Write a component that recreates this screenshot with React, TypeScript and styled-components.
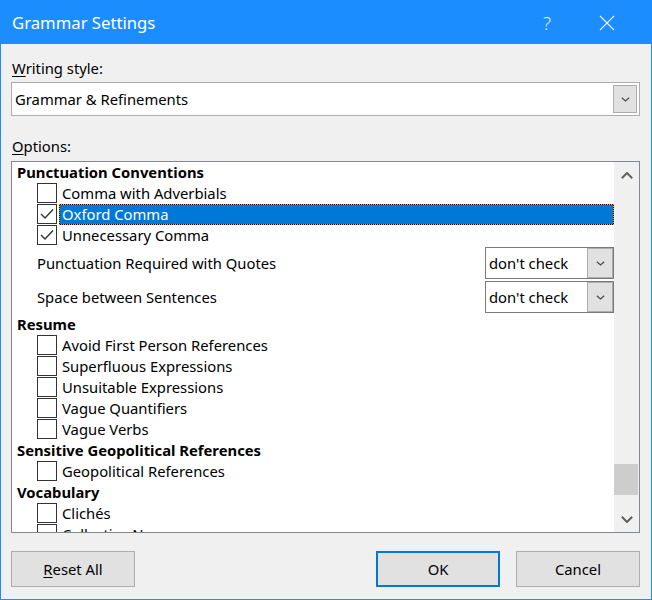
import React from "react";
import styled, { createGlobalStyle } from "styled-components";

const GlobalStyle = createGlobalStyle`
  html, body { margin: 0; padding: 0; background: #f0f0f0; }
  body {
    font-family: "Noto Sans", "Segoe UI", sans-serif;
    font-size: 14.8px;
    color: #000;
  }
  * { box-sizing: border-box; }
`;

const Window = styled.div`
  width: 652px;
  height: 600px;
  border: 1px solid #1c8dfe;
  border-top: none;
  background: #f0f0f0;
  display: flex;
  flex-direction: column;
`;

const TitleBar = styled.div`
  height: 44px;
  margin: 0 -1px;
  padding: 2px 0 0 12px;
  background: #1c8dfe;
  color: #fff;
  display: flex;
  align-items: center;
`;

const Title = styled.div`
  flex: 1;
  font-size: 16.7px;
  line-height: 24px;
`;

const TitleButton = styled.div`
  width: 60px;
  height: 40px;
  display: flex;
  align-items: center;
  justify-content: center;
  color: rgba(255, 255, 255, 0.85);
  font-size: 19px;
  font-weight: 300;
`;

const TitleEnd = styled.div`
  width: 15px;
`;

const Body = styled.div`
  flex: 1;
  display: flex;
  flex-direction: column;
  padding: 0 11px 0 10px;
`;

const FieldLabel = styled.div<{ $top: number }>`
  margin-top: ${(p) => p.$top}px;
  height: 20px;
  line-height: 20px;
  padding-left: 1px;
  white-space: nowrap;
`;

const AccessKey = styled.span`
  text-decoration: underline;
  text-decoration-thickness: 1px;
  text-underline-offset: 2px;
`;

const MainSelect = styled.div`
  margin-top: 4px;
  height: 34px;
  background: #fff;
  border: 1px solid #adadad;
  display: flex;
  align-items: stretch;
`;

const SelectText = styled.div`
  flex: 1;
  display: flex;
  align-items: center;
  padding-left: 3px;
  white-space: nowrap;
`;

const DropButton = styled.div<{ $inset: number }>`
  width: ${(p) => 26 - p.$inset}px;
  margin: ${(p) => p.$inset}px;
  background: #e1e1e1;
  border: 1px solid #adadad;
  display: flex;
  align-items: center;
  justify-content: center;
`;

const ListBox = styled.div`
  margin-top: 5px;
  height: 372px;
  border: 1px solid #828790;
  background: #fff;
  display: flex;
`;

const ListContent = styled.div`
  flex: 1;
  overflow: hidden;
`;

const Heading = styled.div`
  height: 21px;
  line-height: 21px;
  padding-left: 5px;
  font-weight: 700;
  white-space: nowrap;
`;

const CheckRow = styled.div`
  height: 21px;
  display: flex;
  align-items: flex-start;
  padding-left: 25px;
`;

const Box = styled.div`
  width: 20px;
  height: 20px;
  border: 1px solid #333;
  background: #fff;
  display: flex;
  align-items: center;
  justify-content: center;
  flex-shrink: 0;
`;

const FocusFrame = styled.div<{ $selected: boolean }>`
  flex: 1;
  height: 21px;
  margin-left: 2px;
  background: ${(p) => (p.$selected ? "#000" : "transparent")};
`;

const CheckLabel = styled.div<{ $selected: boolean }>`
  height: 21px;
  line-height: 19px;
  padding-left: 2px;
  white-space: nowrap;
  border: 1px ${(p) => (p.$selected ? "dotted #f7a135" : "solid transparent")};
  background: ${(p) => (p.$selected ? "#0078d7" : "transparent")};
  background-clip: padding-box;
  color: ${(p) => (p.$selected ? "#fff" : "#000")};
`;

const SelectRow = styled.div`
  height: 34px;
  display: flex;
  align-items: center;
  justify-content: space-between;
  padding-left: 25px;
`;

const SmallSelect = styled.div`
  width: 129px;
  height: 32px;
  border: 1px solid #7a7a7a;
  background: #fff;
  display: flex;
  align-items: stretch;
`;

const ScrollBar = styled.div`
  width: 25px;
  background: #f0f0f0;
  display: flex;
  flex-direction: column;
`;

const ArrowButton = styled.div`
  height: 26px;
  display: flex;
  align-items: center;
  justify-content: center;
`;

const Track = styled.div`
  flex: 1;
`;

const Thumb = styled.div<{ $offset: number; $size: number }>`
  margin: ${(p) => p.$offset}px 1px 0 0;
  height: ${(p) => p.$size}px;
  background: #cdcdcd;
`;

const ButtonRow = styled.div`
  margin-top: 18px;
  height: 36px;
  display: flex;
  gap: 16px;
`;

const Spacer = styled.div`
  flex: 1;
`;

const PushButton = styled.button<{ $default?: boolean }>`
  width: 124px;
  height: 36px;
  background: #e1e1e1;
  border: ${(p) => (p.$default ? "2px solid #0078d7" : "1px solid #adadad")};
  font-family: inherit;
  font-size: 14.8px;
  color: #000;
  padding: 0;
  white-space: nowrap;
`;

const Chevron = ({ up = false, color = "#606060", w = 10, h = 6, sw = 1 }: { up?: boolean; color?: string; w?: number; h?: number; sw?: number }) => (
  <svg width={w} height={h} viewBox={`0 0 ${w} ${h}`}>
    <polyline
      points={up ? `0.8,${h - 0.8} ${w / 2},1 ${w - 0.8},${h - 0.8}` : `0.8,0.8 ${w / 2},${h - 1} ${w - 0.8},0.8`}
      fill="none"
      stroke={color}
      strokeWidth={sw}
    />
  </svg>
);

const Tick = () => (
  <svg width="14" height="12" viewBox="0 0 14 12">
    <polyline points="1,6 5,10 13,1.5" fill="none" stroke="#333" strokeWidth="1.4" />
  </svg>
);

type Item =
  | { kind: "heading"; text: string }
  | { kind: "check"; text: string; checked?: boolean; selected?: boolean }
  | { kind: "select"; text: string; value: string };

const items: Item[] = [
  { kind: "heading", text: "Punctuation Conventions" },
  { kind: "check", text: "Comma with Adverbials" },
  { kind: "check", text: "Oxford Comma", checked: true, selected: true },
  { kind: "check", text: "Unnecessary Comma", checked: true },
  { kind: "select", text: "Punctuation Required with Quotes", value: "don't check" },
  { kind: "select", text: "Space between Sentences", value: "don't check" },
  { kind: "heading", text: "Resume" },
  { kind: "check", text: "Avoid First Person References" },
  { kind: "check", text: "Superfluous Expressions" },
  { kind: "check", text: "Unsuitable Expressions" },
  { kind: "check", text: "Vague Quantifiers" },
  { kind: "check", text: "Vague Verbs" },
  { kind: "heading", text: "Sensitive Geopolitical References" },
  { kind: "check", text: "Geopolitical References" },
  { kind: "heading", text: "Vocabulary" },
  { kind: "check", text: "Clichés" },
  { kind: "check", text: "Collective Nouns" },
];

export default function App() {
  return (
    <>
      <GlobalStyle />
      <Window>
        <TitleBar>
          <Title>Grammar Settings</Title>
          <TitleButton>?</TitleButton>
          <TitleButton>
            <svg width="16" height="16" viewBox="0 0 16 16">
              <path d="M1 1 L15 15 M15 1 L1 15" stroke="rgba(255,255,255,0.9)" strokeWidth="1.1" />
            </svg>
          </TitleButton>
          <TitleEnd />
        </TitleBar>
        <Body>
          <FieldLabel $top={14}>
            <AccessKey>W</AccessKey>riting style:
          </FieldLabel>
          <MainSelect>
            <SelectText>Grammar &amp; Refinements</SelectText>
            <DropButton $inset={2}>
              <Chevron w={9} h={5} sw={1.2} color="#4a4a4a" />
            </DropButton>
          </MainSelect>
          <FieldLabel $top={20}>
            <AccessKey>O</AccessKey>ptions:
          </FieldLabel>
          <ListBox>
            <ListContent>
              {items.map((it, i) => {
                if (it.kind === "heading") return <Heading key={i}>{it.text}</Heading>;
                if (it.kind === "select")
                  return (
                    <SelectRow key={i}>
                      <span>{it.text}</span>
                      <SmallSelect>
                        <SelectText>{it.value}</SelectText>
                        <DropButton $inset={0}>
                          <Chevron w={9} h={5} sw={1.2} color="#4a4a4a" />
                        </DropButton>
                      </SmallSelect>
                    </SelectRow>
                  );
                return (
                  <CheckRow key={i}>
                    <Box>{it.checked && <Tick />}</Box>
                    <FocusFrame $selected={!!it.selected}>
                      <CheckLabel $selected={!!it.selected}>{it.text}</CheckLabel>
                    </FocusFrame>
                  </CheckRow>
                );
              })}
            </ListContent>
            <ScrollBar>
              <ArrowButton>
                <Chevron up w={12} h={7} sw={2} color="#606060" />
              </ArrowButton>
              <Track>
                <Thumb $offset={276} $size={31} />
              </Track>
              <ArrowButton>
                <Chevron w={12} h={7} sw={2} color="#606060" />
              </ArrowButton>
            </ScrollBar>
          </ListBox>
          <ButtonRow>
            <PushButton>
              <AccessKey>R</AccessKey>eset All
            </PushButton>
            <Spacer />
            <PushButton $default>OK</PushButton>
            <PushButton>Cancel</PushButton>
          </ButtonRow>
        </Body>
      </Window>
    </>
  );
}
